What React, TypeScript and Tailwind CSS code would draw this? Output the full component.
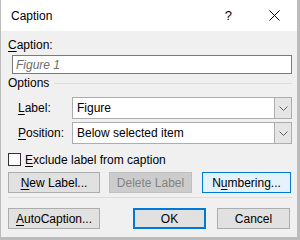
import React from "react";

const U = ({ children }: { children: React.ReactNode }) => <span className="underline underline-offset-[2px]">{children}</span>;

function Chevron() {
  return (
    <svg width="9" height="5" viewBox="0 0 9 5" className="block">
      <path d="M0.5 0.5 L4.5 4.5 L8.5 0.5" fill="none" stroke="#606060" strokeWidth="1" />
    </svg>
  );
}

function Select({ value }: { value: string }) {
  return (
    <div className="flex-1 flex h-[22px] border border-[#adadad] bg-white">
      <div className="flex-1 flex items-center pl-[4px]">{value}</div>
      <div className="w-[17px] flex items-center justify-center bg-[#e5e5e5] border-l border-[#adadad]">
        <Chevron />
      </div>
    </div>
  );
}

function Btn({ children, w, variant = "normal" }: { children: React.ReactNode; w: string; variant?: "normal" | "disabled" | "hover" | "default" }) {
  const base = "h-[21px] flex items-center justify-center box-border";
  const cls =
    variant === "disabled"
      ? "bg-[#cccccc] border border-[#bfbfbf] text-[#838383]"
      : variant === "hover"
      ? "bg-[#e5f1fb] border border-[#0078d7]"
      : variant === "default"
      ? "bg-[#e1e1e1] border-2 border-[#0078d7]"
      : "bg-[#e1e1e1] border border-[#adadad]";
  return <div className={`${base} ${cls} ${w}`}>{children}</div>;
}

export default function App() {
  return (
    <div className="w-[300px] h-[240px] flex flex-col bg-[#f0f0f0] border-l border-r-[3px] border-b-[3px] border-[#bcbcbc] font-['Liberation_Sans',Arial,sans-serif] text-[12px] leading-[14px] text-black select-none">
      <div className="h-[31px] bg-white flex items-center pl-[10px] pr-[17px] pt-[1px]">
        <span>Caption</span>
        <div className="flex-1" />
        <span className="text-[13px] leading-[14px] mr-[37px]">?</span>
        <svg width="11" height="11" viewBox="0 0 11 11" className="block mb-[2px]">
          <path d="M0.5 0.5 L10.5 10.5 M10.5 0.5 L0.5 10.5" stroke="#000" strokeWidth="1" />
        </svg>
      </div>
      <div className="flex-1 flex flex-col pl-[7px] pr-[5px]">
        <div className="mt-[7px] h-[14px]"><U>C</U>aption:</div>
        <div className="mt-[3px] ml-[4px] h-[19px] border border-[#7a7a7a] bg-white flex items-center pl-[3px] italic text-[#6d6d6d]">
          Figure 1
        </div>
        <div className="mt-[2px] h-[14px] flex items-center">
          <span>Options</span>
          <div className="flex-1 h-px bg-[#dcdcdc] ml-[5px]" />
        </div>
        <div className="mt-[7px] flex items-center ml-[10px]">
          <div className="w-[54px]"><U>L</U>abel:</div>
          <Select value="Figure" />
        </div>
        <div className="mt-[3px] flex items-center ml-[10px]">
          <div className="w-[54px]"><U>P</U>osition:</div>
          <Select value="Below selected item" />
        </div>
        <div className="mt-[9px] h-[13px] flex items-center">
          <div className="w-[13px] h-[13px] border border-[#333333] bg-white" />
          <span className="ml-[4px]"><U>E</U>xclude label from caption</span>
        </div>
        <div className="mt-[6px] flex">
          <Btn w="w-[92px]"><U>N</U>ew Label...</Btn>
          <div className="ml-[9px]"><Btn w="w-[83px]" variant="disabled">Delete Label</Btn></div>
          <div className="ml-[10px]"><Btn w="w-[89px]" variant="hover">N<U>u</U>mbering...</Btn></div>
        </div>
        <div className="mt-[4px] h-px bg-[#dcdcdc]" />
        <div className="mt-[10px] flex">
          <Btn w="w-[92px]"><U>A</U>utoCaption...</Btn>
          <div className="ml-[33px]"><Btn w="w-[73px]" variant="default">OK</Btn></div>
          <div className="ml-[11px]"><Btn w="w-[73px]">Cancel</Btn></div>
        </div>
      </div>
    </div>
  );
}
